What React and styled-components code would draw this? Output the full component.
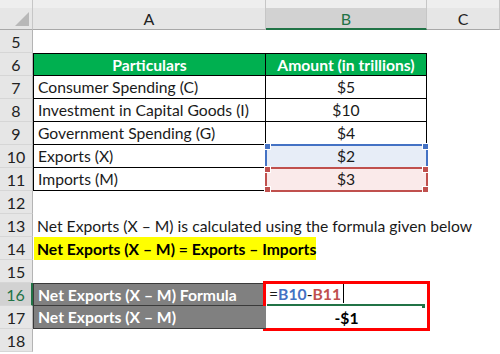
import React from 'react';
import styled, { createGlobalStyle } from 'styled-components';

const GlobalStyle = createGlobalStyle`
  html, body {
    margin: 0;
    padding: 0;
    background: #fff;
  }
  body {
    font-family: Lato, "Open Sans", sans-serif;
    font-size: 15.7px;
    color: #1a1a1a;
    overflow: hidden;
  }
`;

const HEADER_BG = '#e6e6e6';
const SELECT_BG = '#d2d2d2';
const XL_GREEN = '#217346';
const BLUE = '#4472c4';
const RED = '#c0504d';

const rows = [
  { n: 5 },
  { n: 6, kind: 'head', a: 'Particulars', b: 'Amount (in trillions)' },
  { n: 7, kind: 'body', a: 'Consumer Spending (C)', b: '$5' },
  { n: 8, kind: 'body', a: 'Investment in Capital Goods (I)', b: '$10' },
  { n: 9, kind: 'body', a: 'Government Spending (G)', b: '$4' },
  { n: 10, kind: 'body', a: 'Exports (X)', b: '$2', range: 'blue' },
  { n: 11, kind: 'body', a: 'Imports (M)', b: '$3', range: 'red' },
  { n: 12 },
  { n: 13, note: 'Net Exports (X – M) is calculated using the formula given below' },
  { n: 14, mark: 'Net Exports (X – M) = Exports – Imports' },
  { n: 15 },
  { n: 16, kind: 'gray', a: 'Net Exports (X – M) Formula' },
  { n: 17, kind: 'gray', a: 'Net Exports (X – M)' },
  { n: 18 },
];

export default function App() {
  return (
    <>
      <GlobalStyle />
      <Sheet>
        <Corner>
          <svg width="16" height="16" viewBox="0 0 16 16">
            <polygon points="15,1 15,15 1,15" fill="#b8b8b8" />
          </svg>
        </Corner>
        <ColHeader>A</ColHeader>
        <ColHeader selected>B</ColHeader>
        <ColHeader>C</ColHeader>

        {rows.map((r) => (
          <React.Fragment key={r.n}>
            <RowHeader selected={r.n === 16}>{r.n}</RowHeader>
            {r.n === 16 ? (
              <>
                <GrayCell>{r.a}</GrayCell>
                <ResultBox>
                  <FormulaLine>
                    <span>=</span>
                    <Ref color={BLUE}>B10</Ref>
                    <span>-</span>
                    <Ref color={RED}>B11</Ref>
                    <Caret />
                  </FormulaLine>
                  <ResultLine>-$1</ResultLine>
                  <FillHandle />
                </ResultBox>
                <Cell />
              </>
            ) : r.n === 17 ? (
              <>
                <GrayCell last>{r.a}</GrayCell>
                <Cell />
              </>
            ) : r.kind === 'head' ? (
              <>
                <TableCell first top head align="center">{r.a}</TableCell>
                <TableCell top head align="center">{r.b}</TableCell>
                <Cell />
              </>
            ) : r.kind === 'body' ? (
              <>
                <TableCell first>{r.a}</TableCell>
                <TableCell align="center" range={r.range}>
                  {r.b}
                  {r.range && (
                    <RangeBox color={r.range === 'blue' ? BLUE : RED}>
                      <Handle color={r.range === 'blue' ? BLUE : RED} style={{ left: -3, top: -3 }} />
                      <Handle color={r.range === 'blue' ? BLUE : RED} style={{ right: -3, top: -3 }} />
                      {r.range === 'red' && (
                        <>
                          <Handle color={RED} style={{ left: -3, bottom: -3 }} />
                          <Handle color={RED} style={{ right: -3, bottom: -3 }} />
                        </>
                      )}
                    </RangeBox>
                  )}
                </TableCell>
                <Cell />
              </>
            ) : r.note ? (
              <>
                <Cell><Overflow>{r.note}</Overflow></Cell>
                <Cell />
                <Cell />
              </>
            ) : r.mark ? (
              <>
                <Cell><Highlight>{r.mark}</Highlight></Cell>
                <Cell />
                <Cell />
              </>
            ) : (
              <>
                <Cell />
                <Cell />
                <Cell />
              </>
            )}
          </React.Fragment>
        ))}
      </Sheet>
    </>
  );
}

const Sheet = styled.div`
  display: grid;
  grid-template-columns: 33px 233px 161px 73px;
  grid-template-rows: 30px;
  grid-auto-rows: 23px;
  width: 500px;
`;

const Corner = styled.div`
  background: linear-gradient(#eeeeee 0 8px, ${HEADER_BG} 8px);
  border-right: 1px solid #c6c6c6;
  border-bottom: 1px solid #a8a8a8;
  box-sizing: border-box;
  display: flex;
  align-items: flex-end;
  justify-content: flex-end;
  padding: 0 2px 2px 0;

  svg {
    display: block;
  }
`;

const ColHeader = styled.div`
  background: linear-gradient(#eeeeee 0 8px, ${(p) => (p.selected ? SELECT_BG : HEADER_BG)} 8px);
  border-right: 1px solid #c6c6c6;
  border-bottom: ${(p) => (p.selected ? `2px solid ${XL_GREEN}` : '1px solid #a8a8a8')};
  box-sizing: border-box;
  display: flex;
  align-items: center;
  justify-content: center;
  padding-top: 8px;
  color: ${(p) => (p.selected ? XL_GREEN : '#222')};
  font-size: 16px;
`;

const RowHeader = styled.div`
  background: ${(p) => (p.selected ? SELECT_BG : HEADER_BG)};
  border-right: ${(p) => (p.selected ? `2px solid ${XL_GREEN}` : '1px solid #b4b4b4')};
  border-bottom: 1px solid #d6d6d6;
  box-sizing: border-box;
  display: flex;
  align-items: center;
  justify-content: center;
  color: ${(p) => (p.selected ? XL_GREEN : '#222')};
  font-size: 16px;
`;

const Cell = styled.div`
  position: relative;
  box-sizing: border-box;
  display: flex;
  align-items: center;
  padding: 0 4px;
  min-width: 0;
`;

const TableCell = styled(Cell)`
  justify-content: ${(p) => (p.align === 'center' ? 'center' : 'flex-start')};
  border-right: 1px solid #000;
  border-bottom: 1px solid #000;
  border-left: ${(p) => (p.first ? '1px solid #000' : 'none')};
  border-top: ${(p) => (p.top ? '1px solid #000' : 'none')};
  background: ${(p) =>
    p.head ? '#00b050' : p.range === 'blue' ? '#e7edf7' : p.range === 'red' ? '#faeaea' : '#fff'};
  color: ${(p) => (p.head ? '#fff' : '#1a1a1a')};
  font-weight: ${(p) => (p.head ? 700 : 400)};
  white-space: nowrap;
`;

const RangeBox = styled.div`
  position: absolute;
  left: -1px;
  right: -2px;
  top: -1px;
  bottom: -2px;
  border: 2px solid ${(p) => p.color};
  pointer-events: none;
`;

const Handle = styled.span`
  position: absolute;
  width: 5px;
  height: 5px;
  background: ${(p) => p.color};
  border: 1px solid #fff;
`;

const GrayCell = styled(Cell)`
  background: #808080;
  color: #fff;
  font-weight: 700;
  border-bottom: 1px solid #3a3a3a;
  border-left: 1px solid #3a3a3a;
  border-top: ${(p) => (p.last ? 'none' : '1px solid #3a3a3a')};
  white-space: nowrap;
`;

const ResultBox = styled.div`
  grid-row: span 2;
  position: relative;
  display: grid;
  grid-template-rows: 1fr 1fr;
  outline: 3px solid #ff0000;
  outline-offset: -1px;
  margin: 0 -1px;
  background: #fff;
`;

const FormulaLine = styled.div`
  display: flex;
  align-items: center;
  border-bottom: 2px solid ${XL_GREEN};
  margin: 0 4px 0 2px;
  padding-left: 2px;
`;

const Ref = styled.span`
  color: ${(p) => p.color};
  font-weight: 700;
`;

const Caret = styled.span`
  display: inline-block;
  width: 1px;
  height: 19px;
  background: #000;
  margin-left: 2px;
`;

const ResultLine = styled.div`
  display: flex;
  align-items: center;
  justify-content: center;
  font-weight: 700;
  color: #000;
`;

const FillHandle = styled.span`
  position: absolute;
  right: 3px;
  top: 21px;
  width: 3px;
  height: 4px;
  background: ${XL_GREEN};
`;

const Overflow = styled.span`
  white-space: nowrap;
  overflow: visible;
`;

const Highlight = styled.span`
  display: flex;
  align-items: center;
  align-self: stretch;
  box-sizing: border-box;
  width: 293px;
  margin-left: -3px;
  padding-left: 3px;
  background: #ffff00;
  font-weight: 700;
  color: #000;
  white-space: nowrap;
`;
